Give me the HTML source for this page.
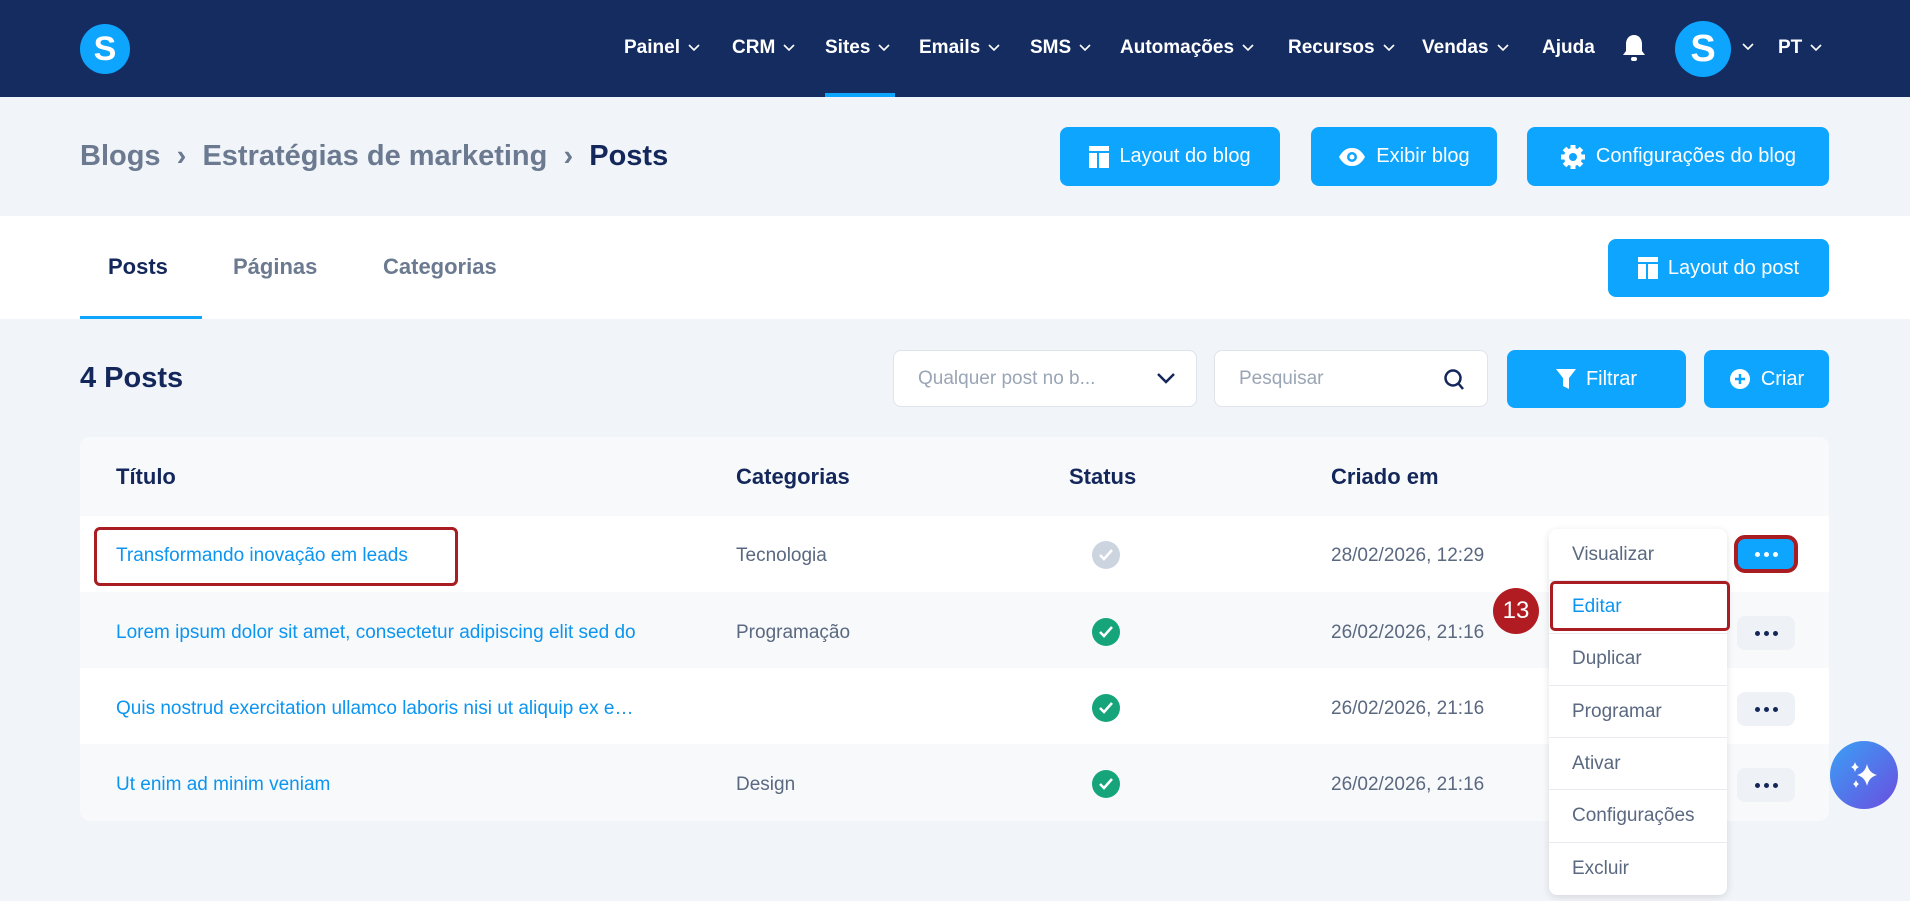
<!DOCTYPE html>
<html><head><meta charset="utf-8"><style>
*{box-sizing:border-box;margin:0;padding:0}
body{width:1910px;height:901px;background:#f1f4f9;font-family:"Liberation Sans",sans-serif;position:relative;overflow:hidden;color:#14275b}
.abs{position:absolute}
.nav{left:0;top:0;width:1910px;height:97px;background:#152c61}
.logo{width:50px;height:50px;border-radius:50%;background:#0ea5ff;color:#fff;font-weight:bold;font-size:34px;display:flex;align-items:center;justify-content:center}
.ni{top:37px;color:#fff;font-weight:bold;font-size:19px;display:flex;align-items:center}
.ni svg{margin-left:8px}
.btn{background:#0ea5ff;color:#fff;border-radius:8px;font-size:20px;display:flex;align-items:center;justify-content:center;gap:10px}
.th{top:464px;font-weight:bold;font-size:22px}
.cell{font-size:19px;color:#5a6880}
.link{color:#0b95f0;font-size:19px}
.ok{width:28px;height:28px;border-radius:50%;background:#16a57a;display:flex;align-items:center;justify-content:center}
.dots{width:58px;height:34px;border-radius:8px;background:#eef1f6;display:flex;align-items:center;justify-content:center;gap:4px}
.dots i{width:5px;height:5px;border-radius:50%;background:#14275b;display:block}
.menu{left:1549px;top:529px;width:178px;height:366px;background:#fff;border-radius:8px;box-shadow:0 2px 8px rgba(0,0,0,.12)}
.mi{height:52.3px;border-bottom:1px solid #e8ebf0;padding-left:23px;display:flex;align-items:center;font-size:19px;color:#5a6880}
</style></head><body>
<div class="abs nav"></div>
<div class="abs logo" style="left:80px;top:24px">S</div>
<div class="abs ni" style="left:624px">Painel<svg width="12" height="8"><path d="M1 1l5 5 5-5" stroke="#fff" stroke-width="1.6" fill="none"/></svg></div>
<div class="abs ni" style="left:732px">CRM<svg width="12" height="8"><path d="M1 1l5 5 5-5" stroke="#fff" stroke-width="1.6" fill="none"/></svg></div>
<div class="abs ni" style="left:825px">Sites<svg width="12" height="8"><path d="M1 1l5 5 5-5" stroke="#fff" stroke-width="1.6" fill="none"/></svg></div>
<div class="abs" style="left:825px;top:93px;width:70px;height:4px;background:#0ea5ff"></div>
<div class="abs ni" style="left:919px">Emails<svg width="12" height="8"><path d="M1 1l5 5 5-5" stroke="#fff" stroke-width="1.6" fill="none"/></svg></div>
<div class="abs ni" style="left:1030px">SMS<svg width="12" height="8"><path d="M1 1l5 5 5-5" stroke="#fff" stroke-width="1.6" fill="none"/></svg></div>
<div class="abs ni" style="left:1120px">Automações<svg width="12" height="8"><path d="M1 1l5 5 5-5" stroke="#fff" stroke-width="1.6" fill="none"/></svg></div>
<div class="abs ni" style="left:1288px">Recursos<svg width="12" height="8"><path d="M1 1l5 5 5-5" stroke="#fff" stroke-width="1.6" fill="none"/></svg></div>
<div class="abs ni" style="left:1422px">Vendas<svg width="12" height="8"><path d="M1 1l5 5 5-5" stroke="#fff" stroke-width="1.6" fill="none"/></svg></div>
<div class="abs ni" style="left:1542px">Ajuda</div>
<svg class="abs" style="left:1622px;top:33px" width="24" height="30" viewBox="0 0 24 30"><path d="M12 2c-5 0-8 4-8 9v7l-3 4h22l-3-4v-7c0-5-3-9-8-9z" fill="#fff"/><rect x="9" y="24" width="6" height="4" rx="2" fill="#fff"/></svg>
<div class="abs logo" style="left:1675px;top:21px;width:56px;height:56px;font-size:38px">S</div>
<svg class="abs" style="left:1742px;top:43px" width="12" height="8"><path d="M1 1l5 5 5-5" stroke="#fff" stroke-width="1.6" fill="none"/></svg>
<div class="abs ni" style="left:1778px">PT<svg width="12" height="8"><path d="M1 1l5 5 5-5" stroke="#fff" stroke-width="1.6" fill="none"/></svg></div>

<div class="abs" style="left:80px;top:140px;font-size:29px;font-weight:bold;color:#6b7a90">Blogs &nbsp;›&nbsp; Estratégias de marketing &nbsp;›&nbsp; <span style="color:#14275b">Posts</span></div>
<div class="abs btn" style="left:1060px;top:127px;width:220px;height:59px"><svg width="20" height="22"><rect x="0" y="0" width="20" height="5" fill="#fff"/><rect x="0" y="7" width="8" height="15" fill="#fff"/><rect x="10" y="7" width="10" height="15" fill="#fff"/></svg>Layout do blog</div>
<div class="abs btn" style="left:1311px;top:127px;width:186px;height:59px"><svg width="28" height="20" viewBox="0 0 28 20"><path d="M1 10C5 3 9 1 14 1s9 2 13 9c-4 7-8 9-13 9S5 17 1 10z" fill="#fff"/><circle cx="14" cy="10" r="5" fill="#0ea5ff"/><circle cx="14" cy="10" r="2.5" fill="#fff"/></svg>Exibir blog</div>
<div class="abs btn" style="left:1527px;top:127px;width:302px;height:59px"><svg width="26" height="26" viewBox="0 0 26 26"><circle cx="13" cy="13" r="9" fill="#fff"/><g stroke="#fff" stroke-width="5"><path d="M13 1v24M1 13h24M4.5 4.5l17 17M21.5 4.5l-17 17"/></g><circle cx="13" cy="13" r="4" fill="#0ea5ff"/></svg>Configurações do blog</div>

<div class="abs" style="left:0;top:216px;width:1910px;height:103px;background:#fff"></div>
<div class="abs" style="left:108px;top:254px;font-size:22px;font-weight:bold">Posts</div>
<div class="abs" style="left:233px;top:254px;font-size:22px;font-weight:bold;color:#6b7a90">Páginas</div>
<div class="abs" style="left:383px;top:254px;font-size:22px;font-weight:bold;color:#6b7a90">Categorias</div>
<div class="abs" style="left:80px;top:316px;width:122px;height:3px;background:#0ea5ff"></div>
<div class="abs btn" style="left:1608px;top:239px;width:221px;height:58px"><svg width="20" height="22"><rect x="0" y="0" width="20" height="5" fill="#fff"/><rect x="0" y="7" width="8" height="15" fill="#fff"/><rect x="10" y="7" width="10" height="15" fill="#fff"/></svg>Layout do post</div>

<div class="abs" style="left:80px;top:362px;font-size:29px;font-weight:bold">4 Posts</div>
<div class="abs" style="left:893px;top:350px;width:304px;height:57px;background:#fff;border:1px solid #dfe3ea;border-radius:8px;font-size:19px;color:#9aa5b5;padding:17px 0 0 24px">Qualquer post no b...<svg class="abs" style="right:20px;top:21px" width="20" height="14"><path d="M2 2l8 8 8-8" stroke="#14275b" stroke-width="2.5" fill="none"/></svg></div>
<div class="abs" style="left:1214px;top:350px;width:274px;height:57px;background:#fff;border:1px solid #dfe3ea;border-radius:8px;font-size:19px;color:#9aa5b5;padding:17px 0 0 24px">Pesquisar<svg class="abs" style="right:22px;top:17px" width="22" height="24"><circle cx="10" cy="10" r="7.5" stroke="#14275b" stroke-width="2.5" fill="none"/><path d="M15 15l5 6" stroke="#14275b" stroke-width="2.5"/></svg></div>
<div class="abs btn" style="left:1507px;top:350px;width:179px;height:58px"><svg width="20" height="22"><path d="M0 1h20l-7 9v11l-6-3v-8z" fill="#fff"/></svg>Filtrar</div>
<div class="abs btn" style="left:1704px;top:350px;width:125px;height:58px"><svg width="22" height="22"><circle cx="11" cy="11" r="10" fill="#fff"/><path d="M11 6v10M6 11h10" stroke="#0ea5ff" stroke-width="2.5"/></svg>Criar</div>

<div class="abs" style="left:80px;top:437px;width:1749px;height:384px;background:#f8f9fb;border-radius:10px;overflow:hidden">
<div style="position:absolute;top:79px;left:0;width:100%;height:76px;background:#fff"></div>
<div style="position:absolute;top:231px;left:0;width:100%;height:76px;background:#fff"></div>
</div>
<div class="abs th" style="left:116px">Título</div>
<div class="abs th" style="left:736px">Categorias</div>
<div class="abs th" style="left:1069px">Status</div>
<div class="abs th" style="left:1331px">Criado em</div>

<div class="abs link" style="left:116px;top:545px">Transformando inovação em leads</div>
<div class="abs link" style="left:116px;top:622px">Lorem ipsum dolor sit amet, consectetur adipiscing elit sed do</div>
<div class="abs link" style="left:116px;top:698px">Quis nostrud exercitation ullamco laboris nisi ut aliquip ex e…</div>
<div class="abs link" style="left:116px;top:774px">Ut enim ad minim veniam</div>
<div class="abs cell" style="left:736px;top:545px">Tecnologia</div>
<div class="abs cell" style="left:736px;top:622px">Programação</div>
<div class="abs cell" style="left:736px;top:774px">Design</div>
<div class="abs ok" style="left:1092px;top:541px;background:#ccd4e0"><svg width="16" height="14"><path d="M2 7l4 4 8-9" stroke="#fff" stroke-width="2.5" fill="none"/></svg></div>
<div class="abs ok" style="left:1092px;top:618px"><svg width="16" height="14"><path d="M2 7l4 4 8-9" stroke="#fff" stroke-width="2.5" fill="none"/></svg></div>
<div class="abs ok" style="left:1092px;top:694px"><svg width="16" height="14"><path d="M2 7l4 4 8-9" stroke="#fff" stroke-width="2.5" fill="none"/></svg></div>
<div class="abs ok" style="left:1092px;top:770px"><svg width="16" height="14"><path d="M2 7l4 4 8-9" stroke="#fff" stroke-width="2.5" fill="none"/></svg></div>
<div class="abs cell" style="left:1331px;top:545px">28/02/2026, 12:29</div>
<div class="abs cell" style="left:1331px;top:622px">26/02/2026, 21:16</div>
<div class="abs cell" style="left:1331px;top:698px">26/02/2026, 21:16</div>
<div class="abs cell" style="left:1331px;top:774px">26/02/2026, 21:16</div>

<div class="abs dots" style="left:1737px;top:538px;background:#0ea5ff;height:32px;outline:4px solid #a81c22;outline-offset:-1px"><i style="background:#fff"></i><i style="background:#fff"></i><i style="background:#fff"></i></div>
<div class="abs dots" style="left:1737px;top:616px"><i></i><i></i><i></i></div>
<div class="abs dots" style="left:1737px;top:692px"><i></i><i></i><i></i></div>
<div class="abs dots" style="left:1737px;top:768px"><i></i><i></i><i></i></div>

<div class="abs menu">
<div class="mi">Visualizar</div><div class="mi" style="color:#0b95f0">Editar</div><div class="mi">Duplicar</div><div class="mi">Programar</div><div class="mi">Ativar</div><div class="mi">Configurações</div><div class="mi" style="border:none">Excluir</div>
</div>

<div class="abs" style="left:94px;top:527px;width:364px;height:59px;border:3px solid #a81c22;border-radius:6px"></div>
<div class="abs" style="left:1550px;top:581px;width:180px;height:50px;border:3px solid #a81c22;border-radius:5px"></div>
<div class="abs" style="left:1493px;top:588px;width:46px;height:46px;border-radius:50%;background:#b01c22;color:#fff;font-size:24px;display:flex;align-items:center;justify-content:center">13</div>

<div class="abs" style="left:1830px;top:741px;width:68px;height:68px;border-radius:50%;background:linear-gradient(135deg,#3aa0f5,#6a4ee0);display:flex;align-items:center;justify-content:center"><svg width="34" height="34" viewBox="0 0 34 34"><path d="M20 6q2 9 10 11q-8 2-10 11q-2-9-10-11q8-2 10-11z" fill="#fff"/><path d="M8 4q1 4 4 5q-3 1-4 5q-1-4-4-5q3-1 4-5z" fill="#fff"/><path d="M9 22q1 3 3 4q-2 1-3 4q-1-3-3-4q2-1 3-4z" fill="#fff"/></svg></div>
</body></html>
